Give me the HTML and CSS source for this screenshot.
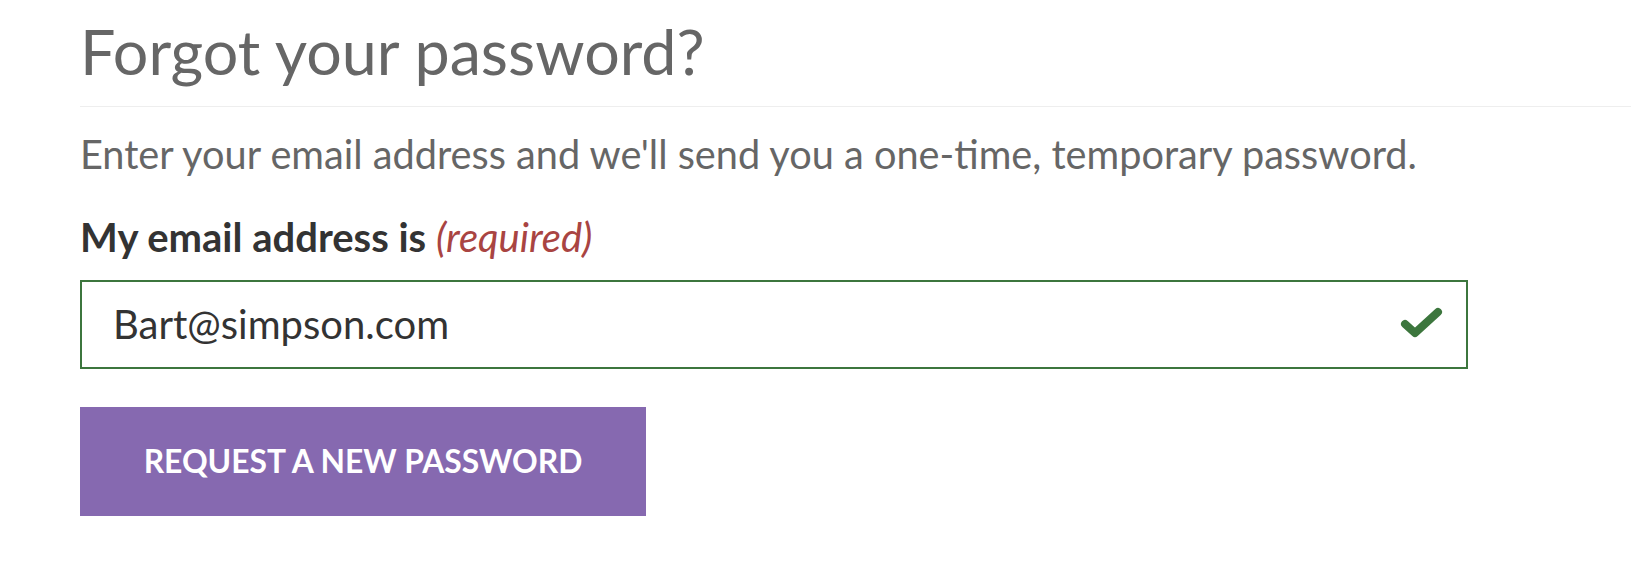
FILE: index.html
```html
<!DOCTYPE html>
<html lang="en">
<head>
	<meta charset="UTF-8">
	<meta name="viewport" content="width=device-width, initial-scale=1.0">
	<title>Forgot your password?</title>
	<link rel="stylesheet" href="styles.css">
</head>
<body>
	<div class="container">
		<h1>Forgot your password?</h1>
		<p class="intro">Enter your email address and we'll send you a one-time, temporary password.</p>

		<form id="reset-form">
			<label for="email">My email address is <em class="required">(required)</em></label>
			<div class="field">
				<input type="email" id="email" name="email" value="Bart@simpson.com">
				<svg class="check" viewBox="0 0 44 32" width="44" height="32" aria-hidden="true">
					<path d="M5 17 L15 26 L38 5" fill="none" stroke="#3c763d" stroke-width="8" stroke-linecap="round" stroke-linejoin="round"/>
				</svg>
			</div>
			<button type="submit">REQUEST A NEW PASSWORD</button>
		</form>
	</div>
</body>
</html>
```

FILE: styles.css
```css
body {
	margin: 0;
	font-family: Lato, "Open Sans", sans-serif;
	background: #fff;
}

.container {
	padding: 13px 0 0 80px;
}

h1 {
	margin: 0;
	padding-bottom: 18px;
	font-size: 62.8px;
	font-weight: normal;
	line-height: 1.2;
	color: #666;
	border-bottom: 1px solid #eee;
}

.intro {
	margin: 23px 0 0;
	font-size: 39.7px;
	line-height: 1.2;
	color: #666;
}

form {
	margin-top: 35px;
}

label {
	display: block;
	font-size: 40px;
	font-weight: bold;
	line-height: 1.2;
	color: #333;
}

.required {
	font-weight: normal;
	color: #a94442;
}

.field {
	position: relative;
	width: 1388px;
	margin-top: 19px;
}

.field input {
	display: block;
	width: 100%;
	height: 89px;
	box-sizing: border-box;
	padding: 0 80px 0 31px;
	font-family: inherit;
	font-size: 40px;
	color: #333;
	border: 2px solid #3c763d;
	border-radius: 0;
	outline: none;
	background: #fff;
}

.check {
	position: absolute;
	right: 24px;
	top: 27px;
}

button {
	display: block;
	width: 566px;
	height: 109px;
	margin-top: 38px;
	font-family: inherit;
	font-size: 31.8px;
	font-weight: bold;
	color: #fff;
	background: #8669b0;
	border: none;
	border-radius: 0;
	cursor: pointer;
}
```
